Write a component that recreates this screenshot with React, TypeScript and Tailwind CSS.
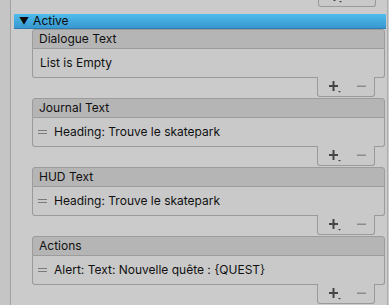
import React from 'react';

const font = { fontFamily: 'Inter, "Noto Sans", sans-serif' };

function PlusIcon() {
  return (
    <svg width="14" height="12" viewBox="0 0 14 12" className="block">
      <rect x="0" y="4" width="9" height="2" fill="#454545" />
      <rect x="3.5" y="0" width="2" height="10" fill="#454545" />
      <path d="M9 10 L12 10 L10.5 11.5 Z" fill="#454545" />
    </svg>
  );
}

function MinusIcon() {
  return (
    <svg width="9" height="3" viewBox="0 0 9 3" className="block">
      <rect x="0" y="0.5" width="9" height="1.5" fill="#8c8c8c" />
    </svg>
  );
}

function Footer({ className = '' }: { className?: string }) {
  return (
    <div
      className={`ml-auto mr-[10px] w-[58px] h-[20px] border-x border-b border-[#9a9a9a] rounded-b-[3px] bg-[#c9c9c9] flex items-center pl-[11px] gap-[14px] ${className}`}
    >
      <div className="mt-[1px]">
        <PlusIcon />
      </div>
      <MinusIcon />
    </div>
  );
}

function Section({ title, items }: { title: string; items: string[] }) {
  return (
    <div className="ml-[21px] w-[353px] mt-[1px] flex flex-col">
      <div className="h-[20px] bg-[#b5b5b5] border border-[#9c9c9c] rounded-t-[3px] pl-[6px] flex items-center text-[12px] text-[#101010]">
        {title}
      </div>
      <div className="h-[29px] border-x border-b border-[#9a9a9a] rounded-b-[3px] bg-[#c9c9c9] flex items-center text-[12px] text-[#101010]">
        {items.length === 0 ? (
          <span className="pl-[7px] -mt-[1px]">List is Empty</span>
        ) : (
          items.map((it) => (
            <div key={it} className="flex items-center -mt-[1px]">
              <div className="ml-[5px] w-[9px] flex flex-col gap-[2px]">
                <div className="h-px bg-[#7a7a7a]" />
                <div className="h-px bg-[#7a7a7a]" />
              </div>
              <span className="ml-[7px]">{it}</span>
            </div>
          ))
        )}
      </div>
      <Footer className="-mt-px" />
    </div>
  );
}

export default function App() {
  return (
    <div className="w-[389px] h-[305px] bg-[#cbcbcb] flex overflow-hidden" style={font}>
      <div className="w-[10px] shrink-0 bg-[#c5c5c5] border-r border-[#a2a2a2] box-content" />
      <div className="w-[376px] shrink-0 flex flex-col">
        <div className="w-[375px] flex flex-col -mt-[13px]">
          <Footer />
        </div>
        <div className="mt-[7px] ml-[3px] w-[372px] h-[15px] bg-gradient-to-b from-[#4fbcec] to-[#3898d0] border-b border-[#2c7cb2] flex items-center text-[12px] text-[#0b0b0b] leading-none">
          <span className="ml-[5px] text-[10px]">▼</span>
          <span className="ml-[4px]">Active</span>
        </div>
        <div className="-mt-px flex flex-col">
          <Section title="Dialogue Text" items={[]} />
          <Section title="Journal Text" items={['Heading: Trouve le skatepark']} />
          <Section title="HUD Text" items={['Heading: Trouve le skatepark']} />
          <Section title="Actions" items={['Alert: Text: Nouvelle quête : {QUEST}']} />
        </div>
      </div>
      <div className="w-px shrink-0 bg-[#adadad]" />
    </div>
  );
}
